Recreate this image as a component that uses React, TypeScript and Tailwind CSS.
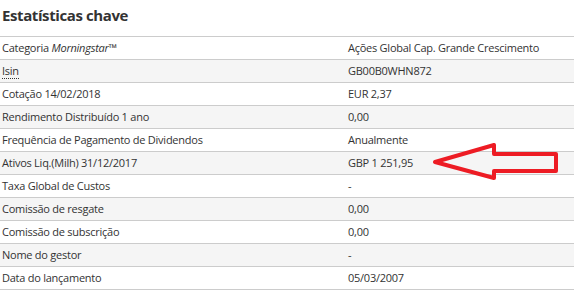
import React from "react";

const rows: [React.ReactNode, string][] = [
  [<>Categoria <i>Morningstar</i>™</>, "Ações Global Cap. Grande Crescimento"],
  [<span className="border-b border-dotted border-[#333]">Isin</span>, "GB00B0WHN872"],
  ["Cotação 14/02/2018", "EUR 2,37"],
  ["Rendimento Distribuído 1 ano", "0,00"],
  ["Frequência de Pagamento de Dividendos", "Anualmente"],
  ["Ativos Liq.(Milh) 31/12/2017", "GBP 1 251,95"],
  ["Taxa Global de Custos", "-"],
  ["Comissão de resgate", "0,00"],
  ["Comissão de subscrição", "0,00"],
  ["Nome do gestor", "-"],
  ["Data do lançamento", "05/03/2007"],
];

export default function App() {
  return (
    <div className="relative w-[574px] h-[299px] bg-white text-[#333] overflow-hidden" style={{ fontFamily: '"Open Sans", "DejaVu Sans", sans-serif' }}>
      <div className="h-[36px] pl-[2px] pt-[4px] text-[15px] tracking-[-0.4px] font-bold text-[#333]">Estatísticas chave</div>
      <div className="border-t border-[#cccccc]">
        {rows.map(([label, value], i) => (
          <div key={i} className={`flex h-[23px] items-center border-b border-[#cccccc] text-[11px] tracking-[-0.25px] ${i % 2 === 1 ? "bg-[#f5f5f5]" : "bg-white"}`}>
            <div className="w-[348px] pl-[2px]">{label}</div>
            <div>{value}</div>
          </div>
        ))}
      </div>
      <svg className="absolute left-0 top-0" width="574" height="299" viewBox="0 0 574 299">
        <polygon points="435,162 494,145 494,154 556,154 556,171 494,171 494,178" fill="none" stroke="#ed1c24" strokeWidth="4" strokeLinejoin="round" />
      </svg>
    </div>
  );
}
